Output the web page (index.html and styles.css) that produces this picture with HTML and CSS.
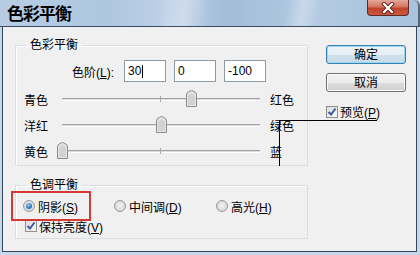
FILE: index.html
```html
<!DOCTYPE html>
<html lang="zh-CN">
<head>
<meta charset="utf-8">
<title>色彩平衡</title>
<link rel="stylesheet" href="styles.css">
</head>
<body>
<div class="window">
  <div class="titlebar">
    <span class="title">色彩平衡</span>
    <div class="close">
      <svg width="14" height="12" viewBox="0 0 14 12">
        <path d="M3 2 L11 10 M11 2 L3 10" stroke="#5a1f1c" stroke-width="4" stroke-linecap="square"/>
        <path d="M3 2 L11 10 M11 2 L3 10" stroke="#ffffff" stroke-width="2.2" stroke-linecap="square"/>
      </svg>
    </div>
  </div>
  <div class="frame">
    <div class="client">
      <div class="main">
        <fieldset class="group balance">
          <legend>色彩平衡</legend>
          <div class="levels">
            <span class="levels-label">色阶(<u>L</u>):</span>
            <div class="field">30<span class="caret"></span></div>
            <div class="field">0</div>
            <div class="field">-100</div>
          </div>
          <div class="slider-row">
            <span class="from">青色</span>
            <div class="track"><i class="tick"></i>
              <span class="thumb" style="left:65%"><svg width="11" height="17" viewBox="0 0 11 17"><path d="M0.5 16.5 V5 Q0.5 2.5 3 1.5 L5.5 0.5 L8 1.5 Q10.5 2.5 10.5 5 V16.5 Z" fill="#e4e4e4" stroke="#8c8c8c"/><path d="M2 15 V6 L5.5 3 L9 6 V15 Z" fill="#d2d2d2"/></svg></span>
            </div>
            <span class="to">红色</span>
          </div>
          <div class="slider-row">
            <span class="from">洋红</span>
            <div class="track"><i class="tick"></i>
              <span class="thumb" style="left:50%"><svg width="11" height="17" viewBox="0 0 11 17"><path d="M0.5 16.5 V5 Q0.5 2.5 3 1.5 L5.5 0.5 L8 1.5 Q10.5 2.5 10.5 5 V16.5 Z" fill="#e4e4e4" stroke="#8c8c8c"/><path d="M2 15 V6 L5.5 3 L9 6 V15 Z" fill="#d2d2d2"/></svg></span>
            </div>
            <span class="to">绿色</span>
          </div>
          <div class="slider-row">
            <span class="from">黄色</span>
            <div class="track"><i class="tick"></i>
              <span class="thumb" style="left:0%"><svg width="11" height="17" viewBox="0 0 11 17"><path d="M0.5 16.5 V5 Q0.5 2.5 3 1.5 L5.5 0.5 L8 1.5 Q10.5 2.5 10.5 5 V16.5 Z" fill="#e4e4e4" stroke="#8c8c8c"/><path d="M2 15 V6 L5.5 3 L9 6 V15 Z" fill="#d2d2d2"/></svg></span>
            </div>
            <span class="to">蓝</span>
          </div>
        </fieldset>
        <fieldset class="group tone">
          <legend>色调平衡</legend>
          <div class="radios">
            <span class="radio r1 checked"><span class="dot"></span><span class="lbl">阴影(<u>S</u>)</span></span>
            <span class="radio r2"><span class="dot"></span><span class="lbl">中间调(<u>D</u>)</span></span>
            <span class="radio r3"><span class="dot"></span><span class="lbl">高光(<u>H</u>)</span></span>
          </div>
          <span class="check keep"><span class="box"><svg width="10" height="10" viewBox="0 0 10 10"><path d="M1.5 5 L4 7.5 L8.5 1.5" fill="none" stroke="#3d5a98" stroke-width="2"/></svg></span><span class="lbl">保持亮度(<u>V</u>)</span></span>
        </fieldset>
      </div>
      <div class="side">
        <div class="btn default">确定</div>
        <div class="btn">取消</div>
        <span class="check preview"><span class="box"><svg width="10" height="10" viewBox="0 0 10 10"><path d="M1.5 5 L4 7.5 L8.5 1.5" fill="none" stroke="#3d5a98" stroke-width="2"/></svg></span><span class="lbl">预览(<u>P</u>)</span></span>
      </div>
    </div>
  </div>
  <div class="highlight"></div>
  <div class="leader"></div>
</div>
</body>
</html>
```

FILE: styles.css
```css
* { box-sizing: border-box; }
html, body { margin: 0; padding: 0; }
body {
  width: 420px;
  height: 255px;
  overflow: hidden;
  background: #ffffff;
  font-family: "Liberation Sans", "Noto Sans CJK SC", sans-serif;
  font-size: 12px;
  color: #000;
}
u { text-decoration: underline; text-underline-offset: 1px; }

.window {
  position: relative;
  width: 420px;
  height: 255px;
  display: flex;
  flex-direction: column;
  background: #c8d8ea;
}

.titlebar {
  height: 27px;
  flex: none;
  display: flex;
  justify-content: space-between;
  align-items: flex-start;
  padding-left: 7px;
  border-bottom: 1px solid #3c4d63;
  border-right: 2px solid #56677c;
  border-top-right-radius: 6px;
  background:
    linear-gradient(100deg, rgba(255,255,255,0) 0%, rgba(255,255,255,0) 38%, rgba(255,255,255,0.35) 44%, rgba(255,255,255,0) 50%, rgba(255,255,255,0) 68%, rgba(255,255,255,0.3) 72%, rgba(255,255,255,0) 76%),
    linear-gradient(to right, #b8cde4 0%, #aec6e0 25%, #bcd0e6 40%, #a2bcd9 55%, #b4cae2 75%, #a8c1dd 100%);
}
.title {
  font-family: "Noto Sans CJK SC", sans-serif;
  font-size: 17px;
  font-weight: bold;
  line-height: 26px;
  letter-spacing: -1px;
  color: #000;
}
.close {
  width: 42px;
  height: 16px;
  margin-right: 9px;
  display: flex;
  align-items: center;
  justify-content: center;
  border: 1px solid #5e2a28;
  border-top: none;
  border-radius: 0 0 4px 4px;
  background: linear-gradient(#e4a89d 0%, #d7745f 45%, #c0432b 55%, #c9593f 100%);
}

.frame {
  flex: 1;
  display: flex;
  padding: 0 3px 3px 2px;
}
.client {
  flex: 1;
  display: flex;
  background: #f0f0f0;
  border: 1px solid #34465c;
  border-top: none;
}

.main {
  margin-left: 12px;
  width: 293px;
  display: flex;
  flex-direction: column;
}

.group {
  margin: 0;
  padding: 0;
  border: 1px solid #d5dfe5;
  box-shadow: inset 1px 1px 0 #ffffff;
  min-width: 0;
}
.group legend {
  margin-left: 10px;
  padding: 0 4px;
  line-height: 14px;
  font-size: 12px;
}
.balance {
  margin-top: 11px;
  padding-bottom: 1px;
}
.tone {
  margin-top: 12px;
  padding-bottom: 5px;
}

.levels {
  margin-top: 8px;
  height: 22px;
  display: flex;
  align-items: center;
  gap: 8px;
}
.levels-label {
  width: 100px;
  text-align: right;
  padding-right: 2px;
}
.field {
  width: 42px;
  height: 22px;
  background: #fff;
  border: 1px solid #8e9aa4;
  padding-left: 3px;
  display: flex;
  align-items: center;
  font-size: 12px;
}
.caret {
  width: 1px;
  height: 13px;
  background: #000;
  margin-left: 1px;
}

.slider-row {
  margin-top: 4px;
  height: 26px;
  display: flex;
  align-items: center;
  padding-left: 8px;
}
.slider-row + .slider-row { margin-top: 0; }
.from { width: 38px; }
.track {
  position: relative;
  width: 198px;
  height: 3px;
  border-top: 1px solid #a2a2a2;
  border-bottom: 1px solid #ffffff;
  background: #dcdcdc;
}
.tick {
  position: absolute;
  left: 98px;
  top: -3px;
  width: 1px;
  height: 6px;
  background: #a8a8a8;
}
.thumb {
  position: absolute;
  top: -9px;
  width: 11px;
  height: 17px;
  margin-left: -5px;
  display: block;
}
.thumb svg { display: block; }
.to { margin-left: 10px; }

.radios {
  margin-top: 7px;
  height: 14px;
  display: flex;
  align-items: center;
  padding-left: 7px;
}
.radio {
  display: flex;
  align-items: center;
  gap: 3px;
}
.r1 { width: 91px; }
.r2 { width: 102px; }
.dot {
  width: 12px;
  height: 12px;
  border-radius: 50%;
  border: 1px solid #9a9a9a;
  background: radial-gradient(circle at 50% 45%, #f4f4f4 0%, #dcdcdc 60%, #c8c8c8 100%);
  display: flex;
  align-items: center;
  justify-content: center;
}
.radio.checked .dot::after {
  content: "";
  width: 6px;
  height: 6px;
  border-radius: 50%;
  background: radial-gradient(circle at 40% 35%, #9fd0f5 0%, #3f7fc0 50%, #1c4f86 100%);
}

.check {
  display: flex;
  align-items: center;
  gap: 2px;
}
.box {
  width: 12px;
  height: 12px;
  border: 1px solid #8e8f8f;
  background: linear-gradient(135deg, #dcdcdc, #fafafa);
  display: flex;
  align-items: center;
  justify-content: center;
}
.box svg { display: block; }
.keep {
  margin-top: 6px;
  height: 14px;
  padding-left: 9px;
}

.side {
  margin-left: 18px;
  margin-top: 18px;
  width: 80px;
  display: flex;
  flex-direction: column;
}
.btn {
  height: 19px;
  border: 1px solid #707070;
  border-radius: 3px;
  background: linear-gradient(#f2f2f2 0%, #ebebeb 50%, #dddddd 51%, #cfcfcf 100%);
  box-shadow: inset 0 0 0 1px #fbfbfb;
  display: flex;
  align-items: center;
  justify-content: center;
  line-height: 1;
}
.btn + .btn { margin-top: 9px; }
.btn.default {
  border-color: #3c7fb1;
  box-shadow: inset 0 0 0 1px #97d8f2;
  background: linear-gradient(#eef5f9 0%, #e3edf4 50%, #d2e2ec 51%, #c6dae7 100%);
}
.preview {
  margin-top: 13px;
  height: 13px;
}

.highlight {
  position: absolute;
  left: 11px;
  top: 191px;
  width: 80px;
  height: 30px;
  border: 2px solid #d63838;
}
.leader {
  position: absolute;
  left: 279px;
  top: 120px;
  width: 98px;
  height: 46px;
  border-top: 1px solid #000;
  border-left: 1px solid #000;
}
```
